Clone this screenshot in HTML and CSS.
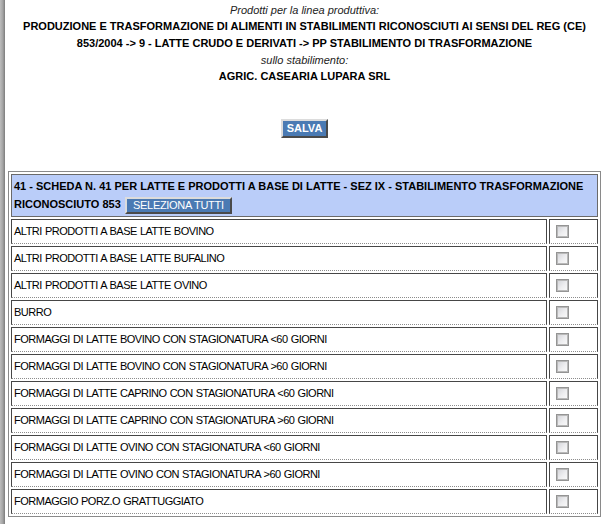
FILE: index.html
```html
<!DOCTYPE html>
<html lang="it">
<head>
<meta charset="utf-8">
<title>Prodotti per la linea produttiva</title>
<link rel="stylesheet" href="styles.css">
</head>
<body>
<div class="edge"></div>
<main class="page">
  <div class="intro">
    <p class="label">Prodotti per la linea produttiva:</p>
    <p class="title">PRODUZIONE E TRASFORMAZIONE DI ALIMENTI IN STABILIMENTI RICONOSCIUTI AI SENSI DEL REG (CE) 853/2004 -&gt; 9 - LATTE CRUDO E DERIVATI -&gt; PP STABILIMENTO DI TRASFORMAZIONE</p>
    <p class="label">sullo stabilimento:</p>
    <p class="title">AGRIC. CASEARIA LUPARA SRL</p>
  </div>
  <div class="actions">
    <button class="btn btn-save" type="button">SALVA</button>
  </div>
  <table class="grid">
    <tr>
      <th class="group" colspan="2">41 - SCHEDA N. 41 PER LATTE E PRODOTTI A BASE DI LATTE - SEZ IX - STABILIMENTO TRASFORMAZIONE RICONOSCIUTO 853 <button class="btn btn-all" type="button">SELEZIONA TUTTI</button></th>
    </tr>
    <tr><td class="name">ALTRI PRODOTTI A BASE LATTE BOVINO</td><td class="pick"><input class="chk" type="checkbox"></td></tr>
    <tr><td class="name">ALTRI PRODOTTI A BASE LATTE BUFALINO</td><td class="pick"><input class="chk" type="checkbox"></td></tr>
    <tr><td class="name">ALTRI PRODOTTI A BASE LATTE OVINO</td><td class="pick"><input class="chk" type="checkbox"></td></tr>
    <tr><td class="name">BURRO</td><td class="pick"><input class="chk" type="checkbox"></td></tr>
    <tr><td class="name">FORMAGGI DI LATTE BOVINO CON STAGIONATURA &lt;60 GIORNI</td><td class="pick"><input class="chk" type="checkbox"></td></tr>
    <tr><td class="name">FORMAGGI DI LATTE BOVINO CON STAGIONATURA &gt;60 GIORNI</td><td class="pick"><input class="chk" type="checkbox"></td></tr>
    <tr><td class="name">FORMAGGI DI LATTE CAPRINO CON STAGIONATURA &lt;60 GIORNI</td><td class="pick"><input class="chk" type="checkbox"></td></tr>
    <tr><td class="name">FORMAGGI DI LATTE CAPRINO CON STAGIONATURA &gt;60 GIORNI</td><td class="pick"><input class="chk" type="checkbox"></td></tr>
    <tr><td class="name">FORMAGGI DI LATTE OVINO CON STAGIONATURA &lt;60 GIORNI</td><td class="pick"><input class="chk" type="checkbox"></td></tr>
    <tr><td class="name">FORMAGGI DI LATTE OVINO CON STAGIONATURA &gt;60 GIORNI</td><td class="pick"><input class="chk" type="checkbox"></td></tr>
    <tr><td class="name">FORMAGGIO PORZ.O GRATTUGGIATO</td><td class="pick"><input class="chk" type="checkbox"></td></tr>
  </table>
</main>
</body>
</html>
```
FILE: styles.css
```css
html, body {
  margin: 0;
  padding: 0;
  background: #fff;
}

body {
  display: flex;
  min-height: 100vh;
  font-family: "Liberation Sans", Arial, sans-serif;
  color: #000;
}

.edge {
  flex: 0 0 5px;
  background: linear-gradient(to right, #bdbdbd, #a4a4a4 55%, #7c7c7c);
}

.page {
  flex: 1 1 auto;
  padding: 2px 3px 0 3px;
  min-width: 0;
}

.intro {
  text-align: center;
}

.intro p {
  margin: 0;
}

.label {
  font-style: italic;
  font-size: 11px;
  line-height: 16px;
  color: #222;
}

.title {
  font-weight: bold;
  font-size: 11px;
  line-height: 17px;
  padding: 0 12px;
}

.actions {
  text-align: center;
  padding-top: 34px;
  height: 19px;
}

.btn {
  display: inline-block;
  margin: 0;
  background: #4a7ab3;
  color: #fff;
  font-family: "Liberation Sans", Arial, sans-serif;
  font-size: 11px;
  border-style: solid;
  border-width: 2px;
  border-color: #dcdcdc #4a4a4a #4a4a4a #dcdcdc;
  cursor: pointer;
  vertical-align: middle;
}

.btn-save {
  font-weight: bold;
  line-height: 15px;
  padding: 0 3px;
  width: 47px;
  height: 19px;
}

.btn-all {
  font-weight: normal;
  letter-spacing: -0.3px;
  line-height: 13px;
  height: 17px;
  width: 107px;
  padding: 0;
  margin-left: 1px;
  white-space: nowrap;
}

.grid {
  margin-top: 33px;
  width: 100%;
  border: 1px solid #8a8a8a;
  border-collapse: separate;
  border-spacing: 2px;
}

.group {
  background: #bacdf9;
  border: 1px solid #6a6a6a;
  text-align: left;
  font-size: 11px;
  font-weight: bold;
  line-height: 18px;
  padding: 2px;
}

.name,
.pick {
  height: 23px;
  padding: 0 2px;
  border: 1px solid #464646;
  border-bottom: 1px dotted #8c8c8c;
  font-size: 11px;
  letter-spacing: -0.5px;
  word-spacing: 0.5px;
  vertical-align: middle;
}

.pick {
  width: 43px;
}

.chk {
  -webkit-appearance: none;
  appearance: none;
  display: block;
  width: 13px;
  height: 13px;
  margin: 0 0 0 4px;
  border: 1px solid #949494;
  box-shadow: inset 0 0 0 1px #b9b9b9;
  background: linear-gradient(135deg, #d2d3d8 0%, #eeeef0 55%, #fbfbfb 100%);
}
```
